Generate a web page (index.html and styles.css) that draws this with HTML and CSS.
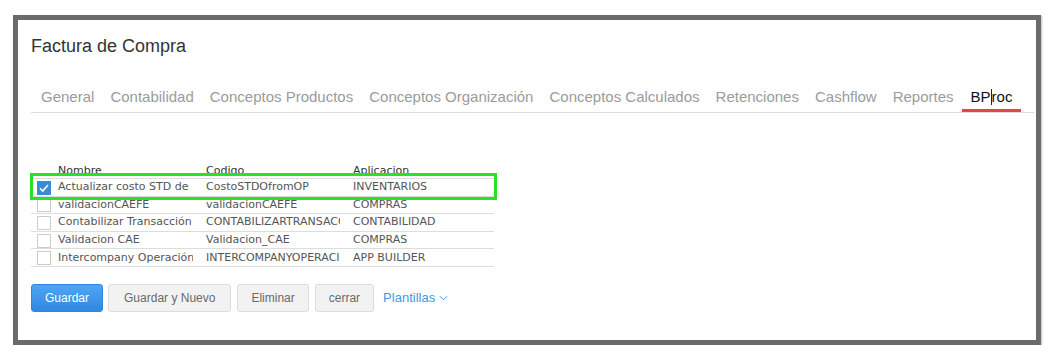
FILE: index.html
```html
<!DOCTYPE html>
<html lang="es">
<head>
  <meta charset="UTF-8">
  <title>Factura de Compra</title>
  <link rel="stylesheet" href="styles.css">
</head>
<body>
  <div class="frame">
    <h1 class="title">Factura de Compra</h1>

    <ul class="tabs">
      <li>General</li>
      <li>Contabilidad</li>
      <li>Conceptos Productos</li>
      <li>Conceptos Organización</li>
      <li>Conceptos Calculados</li>
      <li>Retenciones</li>
      <li>Cashflow</li>
      <li>Reportes</li>
      <li class="active">BP<span class="caret"></span>roc</li>
    </ul>

    <div class="grid-wrap">
      <table class="grid">
        <colgroup>
          <col class="c-check">
          <col class="c-name">
          <col class="c-code">
          <col class="c-app">
        </colgroup>
        <thead>
          <tr>
            <th></th>
            <th>Nombre</th>
            <th>Codigo</th>
            <th>Aplicacion</th>
          </tr>
        </thead>
        <tbody>
          <tr>
            <td><span class="check checked"><svg viewBox="0 0 14 14" width="14" height="14"><path d="M3 7.2 L5.8 10 L11 4" fill="none" stroke="#fff" stroke-width="1.6"/></svg></span></td>
            <td><span class="cell">Actualizar costo STD de</span></td>
            <td><span class="cell">CostoSTDOfromOP</span></td>
            <td><span class="cell">INVENTARIOS</span></td>
          </tr>
          <tr>
            <td><span class="check"></span></td>
            <td><span class="cell">validacionCAEFE</span></td>
            <td><span class="cell">validacionCAEFE</span></td>
            <td><span class="cell">COMPRAS</span></td>
          </tr>
          <tr>
            <td><span class="check"></span></td>
            <td><span class="cell">Contabilizar Transacción</span></td>
            <td><span class="cell">CONTABILIZARTRANSACCION</span></td>
            <td><span class="cell">CONTABILIDAD</span></td>
          </tr>
          <tr>
            <td><span class="check"></span></td>
            <td><span class="cell">Validacion CAE</span></td>
            <td><span class="cell">Validacion_CAE</span></td>
            <td><span class="cell">COMPRAS</span></td>
          </tr>
          <tr>
            <td><span class="check"></span></td>
            <td><span class="cell">Intercompany Operación</span></td>
            <td><span class="cell">INTERCOMPANYOPERACION</span></td>
            <td><span class="cell">APP BUILDER</span></td>
          </tr>
        </tbody>
      </table>
      <div class="highlight"></div>
    </div>

    <div class="actions">
      <button class="btn primary">Guardar</button>
      <button class="btn wide">Guardar y Nuevo</button>
      <button class="btn">Eliminar</button>
      <button class="btn">cerrar</button>
      <a class="link">Plantillas <svg viewBox="0 0 10 6" width="9" height="6"><path d="M1 1 L5 5 L9 1" fill="none" stroke="#3d9ae8" stroke-width="1.1"/></svg></a>
    </div>
  </div>
</body>
</html>
```

FILE: styles.css
```css
body {
  margin: 0;
  background: #fff;
  font-family: "Liberation Sans", Arial, sans-serif;
}

.frame {
  margin: 15px 0 0 13px;
  width: 1003px;
  height: 320px;
  padding: 0 2px 0 13px;
  border: 5px solid #6b6b6b;
  box-shadow: 1px 1px 2px rgba(0, 0, 0, 0.25);
  background: #fff;
}

.title {
  margin: 0;
  padding-top: 15px;
  font-size: 18px;
  font-weight: normal;
  line-height: 22px;
  color: #333;
}

.tabs {
  display: flex;
  list-style: none;
  margin: 31px 0 0 0;
  padding: 0;
  border-bottom: 1px solid #ddd;
}

.tabs li {
  padding: 0 8px;
  font-size: 15px;
  line-height: 18px;
  height: 24px;
  color: #9b9b9b;
  white-space: nowrap;
}

.tabs li:first-child {
  margin-left: 2px;
}

.tabs li.active {
  padding: 0 9px;
  color: #111;
  border-bottom: 3px solid #e8483a;
  height: 21px;
}

.caret {
  display: inline-block;
  width: 1px;
  height: 16px;
  background: #222;
  vertical-align: -3px;
}

.grid-wrap {
  position: relative;
  margin-top: 51px;
}

.grid {
  border-collapse: collapse;
  table-layout: fixed;
  width: 463px;
  font-family: "DejaVu Sans", Verdana, sans-serif;
  font-size: 11px;
  color: #555;
}

.c-check { width: 23px; }
.c-name { width: 148px; }
.c-code { width: 147px; }
.c-app { width: 145px; }

.grid th {
  font-weight: normal;
  color: #333;
  text-align: left;
  padding: 0 0 0 4px;
  height: 14px;
  line-height: 14px;
  border-bottom: 1px solid #ddd;
}

.grid td {
  padding: 0 0 0 4px;
  height: 16.6px;
  line-height: 16px;
  border-bottom: 1px solid #ddd;
  white-space: nowrap;
}

.grid td:first-child {
  padding-left: 6px;
}

.cell {
  display: block;
  overflow: hidden;
  margin-right: 9px;
}

.check {
  display: block;
  width: 12px;
  height: 12px;
  border: 1px solid #ccc;
  background: #fff;
  margin-top: 1px;
}

.check.checked {
  width: 14px;
  height: 14px;
  border: none;
  background: #3a8bd6;
}

.check svg {
  display: block;
}

.highlight {
  position: absolute;
  left: -1px;
  top: 9px;
  width: 461px;
  height: 21px;
  border: 3px solid #27e227;
}

.actions {
  display: flex;
  align-items: center;
  margin-top: 17px;
}

.btn {
  height: 28px;
  padding: 0 13px;
  margin-right: 6px;
  font-family: "Liberation Sans", Arial, sans-serif;
  font-size: 12px;
  color: #6a6a6a;
  background: #f2f2f2;
  border: 1px solid #dcdcdc;
  border-radius: 3px;
}

.btn.wide {
  padding: 0 15px;
}

.btn.primary {
  color: #fff;
  background: linear-gradient(#4ea6f2, #2f88e2);
  border-color: #2f86dc;
  margin-right: 5px;
}

.link {
  margin-left: 3px;
  font-size: 13px;
  color: #3d9ae8;
}

.link svg {
  vertical-align: 1px;
}
```
